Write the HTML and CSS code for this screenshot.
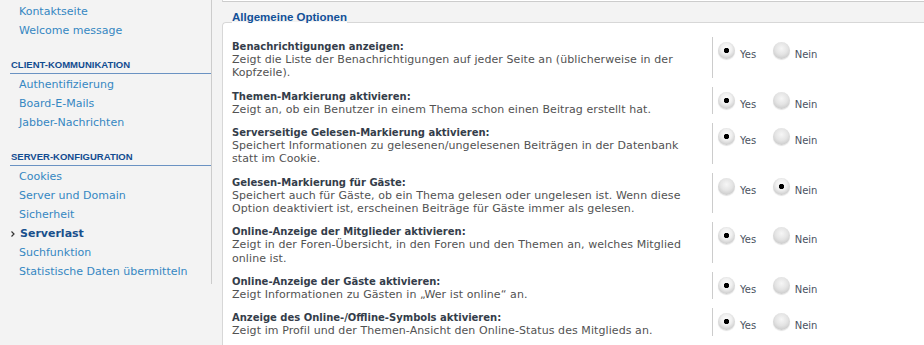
FILE: index.html
```html
<!DOCTYPE html>
<html lang="de">

<head>
    <meta charset="UTF-8">
    <meta name="viewport" content="width=device-width, initial-scale=1.0">
    <title>Serverlast</title>
    <link rel="stylesheet" href="styles.css">
</head>

<body>
    <div class="acp">
        <div class="menu">
            <ul class="menu-list">
                <li><a href="#">Kontaktseite</a></li>
                <li><a href="#">Welcome message</a></li>
            </ul>
            <p class="menu-header">Client-Kommunikation</p>
            <ul class="menu-list">
                <li><a href="#">Authentifizierung</a></li>
                <li><a href="#">Board-E-Mails</a></li>
                <li><a href="#">Jabber-Nachrichten</a></li>
            </ul>
            <p class="menu-header">Server-Konfiguration</p>
            <ul class="menu-list">
                <li><a href="#">Cookies</a></li>
                <li><a href="#">Server und Domain</a></li>
                <li><a href="#">Sicherheit</a></li>
                <li><a href="#" class="active"><svg class="marker" width="4" height="6" viewBox="0 0 4 6"><polyline points="0.5,0.5 3,3 0.5,5.5" fill="none" stroke="#333" stroke-width="1.2"/></svg>Serverlast</a></li>
                <li><a href="#">Suchfunktion</a></li>
                <li><a href="#">Statistische Daten übermitteln</a></li>
            </ul>
        </div>

        <div class="main">
            <div class="prev-box"></div>
            <fieldset class="options">
                <legend>Allgemeine Optionen</legend>

                <dl class="option">
                    <dt><label>Benachrichtigungen anzeigen:</label><span class="explain">Zeigt die Liste der Benachrichtigungen auf jeder Seite an (üblicherweise in der Kopfzeile).</span></dt>
                    <dd>
                        <label><input type="radio" class="radio" name="notifications" checked><span>Yes</span></label>
                        <label><input type="radio" class="radio" name="notifications"><span>Nein</span></label>
                    </dd>
                </dl>

                <dl class="option">
                    <dt><label>Themen-Markierung aktivieren:</label><span class="explain">Zeigt an, ob ein Benutzer in einem Thema schon einen Beitrag erstellt hat.</span></dt>
                    <dd>
                        <label><input type="radio" class="radio" name="dotted" checked><span>Yes</span></label>
                        <label><input type="radio" class="radio" name="dotted"><span>Nein</span></label>
                    </dd>
                </dl>

                <dl class="option">
                    <dt><label>Serverseitige Gelesen-Markierung aktivieren:</label><span class="explain">Speichert Informationen zu gelesenen/ungelesenen Beiträgen in der Datenbank statt im Cookie.</span></dt>
                    <dd>
                        <label><input type="radio" class="radio" name="db_track" checked><span>Yes</span></label>
                        <label><input type="radio" class="radio" name="db_track"><span>Nein</span></label>
                    </dd>
                </dl>

                <dl class="option">
                    <dt><label>Gelesen-Markierung für Gäste:</label><span class="explain">Speichert auch für Gäste, ob ein Thema gelesen oder ungelesen ist. Wenn diese Option deaktiviert ist, erscheinen Beiträge für Gäste immer als gelesen.</span></dt>
                    <dd>
                        <label><input type="radio" class="radio" name="guest_track"><span>Yes</span></label>
                        <label><input type="radio" class="radio" name="guest_track" checked><span>Nein</span></label>
                    </dd>
                </dl>

                <dl class="option">
                    <dt><label>Online-Anzeige der Mitglieder aktivieren:</label><span class="explain">Zeigt in der Foren-Übersicht, in den Foren und den Themen an, welches Mitglied online ist.</span></dt>
                    <dd>
                        <label><input type="radio" class="radio" name="onlinelist" checked><span>Yes</span></label>
                        <label><input type="radio" class="radio" name="onlinelist"><span>Nein</span></label>
                    </dd>
                </dl>

                <dl class="option">
                    <dt><label>Online-Anzeige der Gäste aktivieren:</label><span class="explain">Zeigt Informationen zu Gästen in „Wer ist online“ an.</span></dt>
                    <dd>
                        <label><input type="radio" class="radio" name="onlinelist_guests" checked><span>Yes</span></label>
                        <label><input type="radio" class="radio" name="onlinelist_guests"><span>Nein</span></label>
                    </dd>
                </dl>

                <dl class="option">
                    <dt><label>Anzeige des Online-/Offline-Symbols aktivieren:</label><span class="explain">Zeigt im Profil und der Themen-Ansicht den Online-Status des Mitglieds an.</span></dt>
                    <dd>
                        <label><input type="radio" class="radio" name="online_status" checked><span>Yes</span></label>
                        <label><input type="radio" class="radio" name="online_status"><span>Nein</span></label>
                    </dd>
                </dl>
            </fieldset>
        </div>
    </div>
</body>

</html>
```

FILE: styles.css
```css
body {
    margin: 0;
    height: 100vh;
    overflow: hidden;
    background: #f3f3f3;
    font-family: "DejaVu Sans", Verdana, sans-serif;
}

.acp {
    display: flex;
    align-items: flex-start;
}

/* left menu */
.menu {
    flex-shrink: 0;
    width: 201px;
    padding: 2px 0 3px 10px;
    border-right: 1px solid #cccccc;
}

.menu-list {
    list-style: none;
    margin: 0;
    padding: 0;
}

.menu-list a {
    display: block;
    padding-left: 9px;
    font-size: 11px;
    line-height: 19px;
    color: #3587c2;
    text-decoration: none;
}

.menu-list a.active {
    display: flex;
    align-items: center;
    padding-left: 1px;
    font-weight: bold;
    color: #19508c;
}

.marker {
    margin-right: 5px;
}

.menu-header {
    margin: 19px 0 1px;
    padding: 0 0 2px 1px;
    font: bold 9.5px/12px "Liberation Sans", Arial, sans-serif;
    text-transform: uppercase;
    color: #124c90;
    border-bottom: 1px solid #6a92c2;
}

/* main column */
.main {
    flex: 1;
    min-width: 0;
    padding-left: 10px;
}

.prev-box {
    height: 1px;
    margin-right: -20px;
    background: #ffffff;
    border: 1px solid #cccccc;
    border-top: 0;
    border-left-color: #d7d7d7;
}

.options {
    min-width: 0;
    margin: 8px -20px 0 0;
    padding: 1px 10px 10px 9px;
    background: #ffffff;
    border: 1px solid #cccccc;
    border-top-color: #d7d7d7;
    border-left-color: #d7d7d7;
    border-radius: 4px;
}

.options legend {
    padding: 0 0 11px;
    font: bold 11.5px/14px "Liberation Sans", Arial, sans-serif;
    color: #115098;
}

.option {
    display: grid;
    grid-template-columns: 480px 1fr;
    margin: 0;
    padding: 1px 0 6px;
}

.option dt {
    padding: 3px 10px 0 0;
    line-height: 13.2px;
}

.option dt label {
    display: block;
    font-size: 10px;
    font-weight: bold;
    color: #343d4a;
}

.explain {
    display: block;
    font-size: 11px;
    letter-spacing: 0.08px;
    color: #525252;
}

.option dd {
    display: flex;
    align-items: flex-start;
    gap: 16.5px;
    margin: 0 0 2px;
    padding: 5px 0 0 5px;
    border-left: 1px solid #cccccc;
}

.option dd label {
    display: flex;
    align-items: flex-start;
    font-size: 10px;
    color: #4a5261;
}

.option dd label span {
    margin-top: 6px;
    line-height: 13px;
}

.radio {
    appearance: none;
    width: 17px;
    height: 17px;
    margin: 0 5px 0 0;
    border-radius: 50%;
    background: radial-gradient(circle at 50% 38%, #f6f6f6 0, #e4e4e4 45%, #cacaca 80%, #adadad 100%);
    box-shadow: 0 1px 1px rgba(0, 0, 0, 0.12);
}

.radio:checked {
    background: radial-gradient(circle, #000000 0 2.3px, transparent 3px),
        radial-gradient(circle at 50% 40%, #ffffff 0, #f0f0f0 40%, #c8c8c8 80%, #a5a5a5 100%);
}
```
